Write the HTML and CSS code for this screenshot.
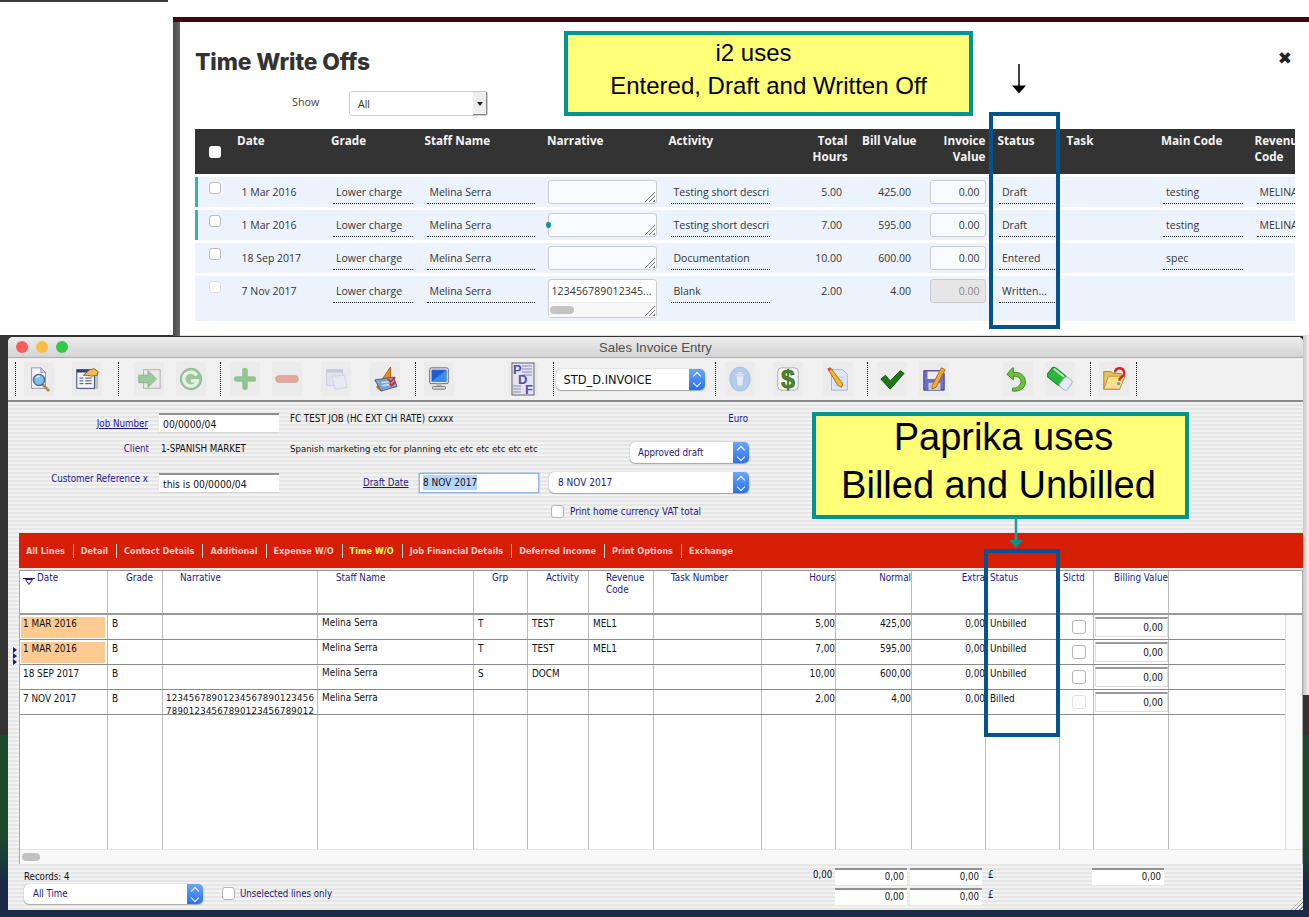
FILE: index.html
```html
<!DOCTYPE html>
<html lang="en">
<head>
<meta charset="utf-8">
<title>Time Write Offs vs Sales Invoice Entry</title>
<link rel="stylesheet" href="styles.css">
</head>
<body>
<div class="topline"></div>
<div class="desk-lower"></div>
<div class="desk-right"></div>

<section class="shell">
  <div class="modal">
    <header class="modal-head">
      <h1 class="modal-title">Time Write Offs</h1>
      <span class="modal-close">&#10006;</span>
    </header>
    <div class="show-row">
      <label class="show-label">Show</label>
      <div class="show-select"><span>All</span><i class="show-arrow"></i></div>
    </div>
    <div class="tw-table">
      <div class="tw-grid tw-header">
        <div class="th th-check"><input type="checkbox" class="tw-check head-check"></div>
        <div class="th">Date</div><div class="th">Grade</div><div class="th">Staff Name</div><div class="th">Narrative</div><div class="th">Activity</div>
        <div class="th num">Total<br>Hours</div><div class="th num">Bill Value</div><div class="th num">Invoice<br>Value</div>
        <div class="th th-status">Status</div><div class="th">Task</div><div class="th">Main Code</div><div class="th th-rev">Revenue Code</div>
      </div>
      <div class="tw-grid tw-row flagged">
        <div class="td-check"><input type="checkbox" class="tw-check"></div>
        <div class="td-date">1 Mar 2016</div><div class="dot">Lower charge</div><div class="dot">Melina Serra</div>
        <div class="area"><i class="grip"></i></div>
        <div class="dot">Testing short descri</div><div class="td-num">5.00</div><div class="td-num">425.00</div>
        <div class="inv">0.00</div><div class="dot dot-status">Draft</div><div></div><div class="dot">testing</div><div class="dot dot-rev">MELINA</div>
      </div>
      <div class="tw-grid tw-row flagged">
        <div class="td-check"><input type="checkbox" class="tw-check"></div>
        <div class="td-date">1 Mar 2016</div><div class="dot">Lower charge</div><div class="dot">Melina Serra</div>
        <div class="area"><i class="handle"></i><i class="grip"></i></div>
        <div class="dot">Testing short descri</div><div class="td-num">7.00</div><div class="td-num">595.00</div>
        <div class="inv">0.00</div><div class="dot dot-status">Draft</div><div></div><div class="dot">testing</div><div class="dot dot-rev">MELINA</div>
      </div>
      <div class="tw-grid tw-row">
        <div class="td-check"><input type="checkbox" class="tw-check"></div>
        <div class="td-date">18 Sep 2017</div><div class="dot">Lower charge</div><div class="dot">Melina Serra</div>
        <div class="area"><i class="grip"></i></div>
        <div class="dot">Documentation</div><div class="td-num">10.00</div><div class="td-num">600.00</div>
        <div class="inv">0.00</div><div class="dot dot-status">Entered</div><div></div><div class="dot">spec</div><div></div>
      </div>
      <div class="tw-grid tw-row tall">
        <div class="td-check"><input type="checkbox" class="tw-check dim"></div>
        <div class="td-date">7 Nov 2017</div><div class="dot">Lower charge</div><div class="dot">Melina Serra</div>
        <div class="area area-tall"><span class="area-text">123456789012345...</span><span class="area-scroll"><i class="area-thumb"></i></span><i class="grip"></i></div>
        <div class="dot">Blank</div><div class="td-num">2.00</div><div class="td-num">4.00</div>
        <div class="inv inv-off">0.00</div><div class="dot dot-status">Written...</div><div></div><div></div><div></div>
      </div>
    </div>
  </div>
</section>

<section class="win">
  <header class="titlebar">
    <span class="light red"></span><span class="light amber"></span><span class="light green"></span>
    <span class="win-title">Sales Invoice Entry</span>
  </header>
  <nav class="toolbar">
    <i class="sep"></i>
    <span class="tb"><svg viewBox="0 0 28 28"><path d="M6 2h10l5 5v17H6z" fill="#f5f5fc" stroke="#8f8fb8"/><path d="M16 2v5h5z" fill="#d5d5ee" stroke="#8f8fb8"/><path d="M18 20l6 6" stroke="#b08a50" stroke-width="3" stroke-linecap="round"/><circle cx="14" cy="15" r="6" fill="#79c2ef" stroke="#57677e" stroke-width="1.5"/><path d="M11 13a4 4 0 0 1 4-2" stroke="#e4f6ff" stroke-width="1.5" fill="none"/></svg></span>
    <span class="tb"><svg viewBox="0 0 28 28"><rect x="5" y="5" width="21" height="20" fill="#c0c0c0" rx="2"/><rect x="3" y="4" width="19" height="20" fill="#f4f4f4" stroke="#2f3f78"/><rect x="3" y="4" width="19" height="3" fill="#2f3f78"/><path d="M6 13h4M12 13h7M6 16h4M12 16h7M6 19h4M12 19h7" stroke="#2f3f78"/><path d="M10 10l7-6 5-1 4 3-1 4-6 1-4-1z" fill="#f0bd54" stroke="#8a5a1a"/></svg></span>
    <i class="sep"></i>
    <span class="tb faded"><svg viewBox="0 0 28 28"><rect x="8" y="4" width="18" height="20" fill="#e8e8e8" stroke="#777"/><path d="M3 10h10V5l9 9-9 9v-5H3z" fill="#4da84d" stroke="#2e7a2e"/></svg></span>
    <span class="tb faded"><svg viewBox="0 0 28 28"><circle cx="14" cy="14" r="11.5" fill="#4fa64f" stroke="#2f7f2f"/><path d="M20 10a7.5 7.5 0 1 0 1 6h-7" fill="none" stroke="#e8f6e8" stroke-width="3.5"/></svg></span>
    <i class="sep"></i>
    <span class="tb faded"><svg viewBox="0 0 28 28"><path d="M14 5v18M5 14h18" stroke="#3c9c3c" stroke-width="6" stroke-linecap="round"/></svg></span>
    <span class="tb faded"><svg viewBox="0 0 28 28"><rect x="2" y="10.500" width="24" height="7" rx="3" fill="#e06a50" stroke="#b85040"/></svg></span>
    <span class="tb faded"><svg viewBox="0 0 28 28"><rect x="4" y="4" width="17" height="17" fill="#dcdcf4" stroke="#a8a8d8"/><rect x="4" y="4" width="17" height="3" fill="#a8a8d8"/><path d="M10 11l13-1 3 13-13 2z" fill="#e4ecf8" stroke="#b0bcd8"/></svg></span>
    <span class="tb"><svg viewBox="0 0 28 28"><path d="M5 23L20 1v13L10 27z" fill="#e88a1a" stroke="#a85a10"/><path d="M3 15l20-3 4 10-17 5z" fill="#7aa6dc" stroke="#555"/><path d="M10 18l8-1M11 21l8-1" stroke="#fff"/><path d="M17 14l3 3 5-5M19 19l2 2 4-4" stroke="#e02020" stroke-width="1.8" fill="none"/></svg></span>
    <i class="sep"></i>
    <span class="tb"><svg viewBox="0 0 28 28"><rect x="4" y="2" width="20" height="17" rx="1.500" fill="#e6e6e6" stroke="#666"/><rect x="6" y="4" width="16" height="13" fill="#1a5fd8"/><path d="M6 17L22 4v13z" fill="#3f8cf0"/><path d="M11 19h6v3h-6z" fill="#bbb"/><rect x="7" y="22" width="14" height="3" rx="1" fill="#d8d8d8" stroke="#777"/></svg></span>
    <span class="tb tb-pdf"><svg viewBox="0 0 24 34"><rect x="1" y="1" width="22" height="32" fill="#e4e4f0" stroke="#666"/><path d="M11 4h10M11 7h10M11 10h10M11 13h10M2 24h8M2 27h8M2 30h8" stroke="#8888a8"/><text x="2" y="12" class="pdf-l">P</text><text x="7" y="22" class="pdf-l">D</text><text x="14" y="32" class="pdf-l">F</text></svg></span>
    <i class="sep"></i>
    <div class="stepper tb-select"><span>STD_D.INVOICE</span><i class="step"></i></div>
    <i class="sep"></i>
    <span class="tb faded"><svg viewBox="0 0 28 28"><ellipse cx="14" cy="14" rx="11" ry="13" fill="#7aaef0" stroke="#5c90d0"/><path d="M10.500 11h7l-1 10h-5z" fill="#e4eefc"/><path d="M9 9.500h10M12 7.500h4" stroke="#e4eefc" stroke-width="1.500"/></svg></span>
    <span class="tb"><svg viewBox="0 0 28 28"><rect x="3" y="2" width="22" height="24" rx="4" fill="#f6f6f6" stroke="#aaa"/><text x="14" y="24" class="dollar">$</text></svg></span>
    <span class="tb"><svg viewBox="0 0 28 28"><path d="M7 4h12l5 5v17H7z" fill="#dfe8fa" stroke="#9ab0dc"/><path d="M10 12h11M10 15h11M10 18h11M10 21h11" stroke="#b8c8ec"/><path d="M3 3l3-1 13 17-1 4-4-2z" fill="#f4b82c" stroke="#a86c10"/><path d="M3 3l3-1 1 2-3 2z" fill="#e05040"/></svg></span>
    <i class="sep"></i>
    <span class="tb"><svg viewBox="0 0 28 28"><path d="M2 14l5-4 5 6L23 5l4 3-15 17z" fill="#1d7a14" stroke="#0e4d0a" stroke-linejoin="round"/></svg></span>
    <span class="tb"><svg viewBox="0 0 28 28"><path d="M3 5h19l3 3v18H3z" fill="#6e6ec8" stroke="#3d3d8a"/><rect x="7" y="6" width="13" height="8" fill="#ececf8"/><rect x="8" y="18" width="13" height="8" fill="#c8c8d8"/><path d="M12 21L22 2l4 2-10 19-4 2z" fill="#f5a623" stroke="#a86a10"/></svg></span>
    <span class="tb"><svg viewBox="0 0 28 28"><path d="M8 2L2 9l7 6v-4c6 0 9 3 8 7s-5 6-9 6v3c8 1 14-3 14-10S16 6 9 7V2z" fill="#6cc23c" stroke="#3d8a1c"/></svg></span>
    <span class="tb"><svg viewBox="0 0 28 28"><g transform="rotate(38 14 14)"><rect x="0" y="7.500" width="19" height="13" rx="3" fill="#2cb53c" stroke="#1a7a26"/><rect x="17" y="7.500" width="10" height="13" rx="3" fill="#e4ecf8" stroke="#a8b8cc"/><path d="M2 9.500h14" stroke="#bfeac4" stroke-width="2"/></g></svg></span>
    <i class="sep"></i>
    <span class="tb"><svg viewBox="0 0 28 28"><path d="M3 6h8l2 2h9l-2 17H3z" fill="#e8c25a" stroke="#a88428"/><path d="M8 11h18l-6 14H3z" fill="#f8e08c" stroke="#b8942c"/><path d="M15 7a5 5 0 1 1 7 5l-2 2v2" fill="none" stroke="#d82020" stroke-width="2.500"/><circle cx="19" cy="19" r="1.800" fill="#3fa8d8"/></svg></span>
    <i class="sep"></i>
  </nav>

  <div class="stripes win-body">
    <form class="entry">
      <a class="lbl lbl-link lbl-job">Job Number</a>
      <input class="field field-job" value="00/0000/04" readonly>
      <span class="txt txt-top desc-a">FC TEST JOB (HC EXT CH RATE) cxxxx</span>
      <span class="lbl txt-top euro">Euro</span>

      <span class="lbl lbl-top lbl-client">Client</span>
      <span class="txt lbl-top val-client">1-SPANISH MARKET</span>
      <span class="txt lbl-top desc-b">Spanish marketing etc for planning etc etc etc etc etc etc</span>
      <div class="stepper sel-approved"><span>Approved draft</span><i class="step"></i></div>

      <span class="lbl lbl-top lbl-cust">Customer Reference x</span>
      <input class="field field-cust" value="this is 00/0000/04" readonly>
      <a class="lbl lbl-link lbl-draft">Draft Date</a>
      <div class="field-focus"><span class="sel-text">8 NOV 2017</span></div>
      <div class="stepper sel-date"><span>8 NOV 2017</span><i class="step"></i></div>

      <label class="check-line"><input type="checkbox" class="mac-check"><span>Print home currency VAT total</span></label>
    </form>

    <div class="tabs">
      <span class="tab">All Lines</span><span class="tab">Detail</span><span class="tab">Contact Details</span><span class="tab">Additional</span><span class="tab">Expense W/O</span><span class="tab tab-on">Time W/O</span><span class="tab">Job Financial Details</span><span class="tab">Deferred Income</span><span class="tab">Print Options</span><span class="tab tab-last">Exchange</span>
    </div>

    <div class="list">
      <div class="lgrid lhead">
        <div class="lh lh-date"><svg class="sort" viewBox="0 0 12 7"><path d="M0 .5h12M2.500 1.500h7L6 6.500z" fill="none" stroke="#1a1a80"/></svg>Date</div>
        <div class="lh lh-grade">Grade</div><div class="lh lh-narr">Narrative</div><div class="lh lh-staff">Staff Name</div><div class="lh lh-grp">Grp</div><div class="lh lh-act">Activity</div><div class="lh lh-rev">Revenue<br>Code</div><div class="lh lh-task">Task Number</div><div class="lh r">Hours</div><div class="lh r">Normal</div><div class="lh r">Extra</div><div class="lh lh-status">Status</div><div class="lh lh-sl">Slctd</div><div class="lh r">Billing Value</div><div class="lh lh-end"></div>
      </div>
      <div class="lmain">
        <div class="lrows">
          <div class="lgrid lrow"><div class="c c-date"><span class="hl">1 MAR 2016</span></div><div class="c">B</div><div class="c"></div><div class="c c-up">Melina Serra</div><div class="c">T</div><div class="c">TEST</div><div class="c">MEL1</div><div class="c"></div><div class="c r">5,00</div><div class="c r">425,00</div><div class="c r">0,00</div><div class="c c-st">Unbilled</div><div class="c c-box"><input type="checkbox" class="mac-check"></div><div class="c c-bv"><span class="bv">0,00</span></div><div class="c c-end"></div></div>
          <div class="lgrid lrow"><div class="c c-date"><span class="hl">1 MAR 2016</span></div><div class="c">B</div><div class="c"></div><div class="c c-up">Melina Serra</div><div class="c">T</div><div class="c">TEST</div><div class="c">MEL1</div><div class="c"></div><div class="c r">7,00</div><div class="c r">595,00</div><div class="c r">0,00</div><div class="c c-st">Unbilled</div><div class="c c-box"><input type="checkbox" class="mac-check"></div><div class="c c-bv"><span class="bv">0,00</span></div><div class="c c-end"></div></div>
          <div class="lgrid lrow"><div class="c c-date">18 SEP 2017</div><div class="c">B</div><div class="c"></div><div class="c c-up">Melina Serra</div><div class="c">S</div><div class="c">DOCM</div><div class="c"></div><div class="c"></div><div class="c r">10,00</div><div class="c r">600,00</div><div class="c r">0,00</div><div class="c c-st">Unbilled</div><div class="c c-box"><input type="checkbox" class="mac-check"></div><div class="c c-bv"><span class="bv">0,00</span></div><div class="c c-end"></div></div>
          <div class="lgrid lrow"><div class="c c-date">7 NOV 2017</div><div class="c">B</div><div class="c c-long">12345678901234567890123456<br>78901234567890123456789012</div><div class="c c-up">Melina Serra</div><div class="c"></div><div class="c"></div><div class="c"></div><div class="c"></div><div class="c r">2,00</div><div class="c r">4,00</div><div class="c r">0,00</div><div class="c c-st">Billed</div><div class="c c-box"><input type="checkbox" class="mac-check dim"></div><div class="c c-bv"><span class="bv">0,00</span></div><div class="c c-end"></div></div>
          <div class="lgrid lfill"><div class="c"></div><div class="c"></div><div class="c"></div><div class="c"></div><div class="c"></div><div class="c"></div><div class="c"></div><div class="c"></div><div class="c"></div><div class="c"></div><div class="c"></div><div class="c"></div><div class="c"></div><div class="c"></div><div class="c c-end"></div></div>
        </div>
        <div class="vscroll"></div>
      </div>
      <div class="hscroll"><i class="hthumb"></i></div>
    </div>

    <footer class="foot">
      <span class="f-records">Records: 4</span>
      <span class="f-zero">0,00</span>
      <span class="f-field">0,00</span><span class="f-field">0,00</span>
      <span class="f-pound">£</span>
      <span class="f-field f-bill">0,00</span>
      <div class="f-left">
        <div class="stepper sel-time"><span>All Time</span><i class="step"></i></div>
        <label class="check-line line-foot"><input type="checkbox" class="mac-check"><span>Unselected lines only</span></label>
      </div>
      <span class="f-field f-c2">0,00</span><span class="f-field">0,00</span>
      <span class="f-pound">£</span>
    </footer>
    <i class="win-grip"></i>
    <i class="nav-marks"></i>
  </div>
</section>

<aside class="callout callout-top"><p class="line-i2">i2 uses</p><p>Entered, Draft and Written Off</p></aside>
<svg class="arrow-black" viewBox="0 0 16 30"><path d="M8 0v24" stroke="#000" stroke-width="1.500"/><path d="M1 21.500h14L8 29.500z" fill="#000"/></svg>
<div class="status-box box-top"></div>
<aside class="callout callout-low"><p class="line-pap">Paprika uses</p><p class="line-bil">Billed and Unbilled</p></aside>
<svg class="arrow-teal" viewBox="0 0 16 30"><path d="M8 0v23" stroke="#17a19e" stroke-width="2.500"/><path d="M1 21h14l-7 8z" fill="#00938f"/></svg>
<div class="status-box box-low"></div>
</body>
</html>
```
FILE: styles.css
```css
* { box-sizing: border-box; }
html, body { margin: 0; padding: 0; }
body {
  position: relative;
  width: 1309px;
  height: 917px;
  overflow: hidden;
  background: #fff;
  font-family: "Open Sans", "Noto Sans", sans-serif;
  color: #222;
}
p { margin: 0; }

/* desktop behind the windows */
.topline { position: absolute; left: 0; top: 0; width: 168px; height: 2px; background: #3c3c3c; }
.desk-lower {
  position: absolute; left: 0; right: 0; top: 335px; bottom: 0;
  background:
    linear-gradient(#333 0 400px, transparent 400px),
    linear-gradient(#1d4a2b 0 500px, #1a3a3a 530px, #1b2a46 545px);
}
.desk-right {
  position: absolute; left: 1303px; right: 0; top: 335px; height: 360px;
  background: linear-gradient(90deg, #c4c4c4, #f4f4f4);
}

/* web modal */
.shell {
  position: absolute; left: 173px; top: 17px; right: 0; height: 319px;
  border-top: 5px solid #3d0812;
  padding-left: 7px;
  background: linear-gradient(90deg, #4a4a4a, #666 7px, #fff 7px);
}
.modal {
  height: 100%;
  background: #fff;
  border-radius: 6px 6px 0 0;
  padding: 0 14px 0 15px;
  border-bottom: 1px solid #ddd;
}
.modal-head { display: flex; justify-content: space-between; height: 58px; }
.modal-title {
  margin: 25px 0 0;
  font: 800 22.800px/30px Inter, "Open Sans", sans-serif;
  letter-spacing: -.1px;
  color: #333;
}
.modal-close { margin: 25px 3px 0 0; font: 700 17px/22px "DejaVu Sans", sans-serif; color: #222; }
.show-row { display: flex; align-items: flex-start; height: 49px; padding-left: 97px; }
.show-label { font-size: 10.800px; line-height: 14px; width: 57px; color: #444; margin-top: 15px; }
.show-select {
  width: 139px; height: 25px; margin-top: 11px;
  display: flex; justify-content: space-between; align-items: stretch;
  border: 1px solid #ccc; border-radius: 3px;
  font-size: 10.500px; line-height: 24px; padding-left: 8px; color: #333;
}
.show-arrow {
  position: relative; width: 14px;
  background: #eee; border-right: 1px solid #888; border-bottom: 1px solid #888;
}
.show-arrow::after {
  content: ""; position: absolute; left: 4px; top: 10px;
  border: 3px solid transparent; border-top: 4px solid #222; border-bottom: 0;
}
.tw-table { width: 1100px; overflow: hidden; }
.tw-grid {
  display: grid;
  grid-template-columns: 40px 94px 93.500px 122.500px 121.500px 113.500px 69.500px 69px 69px 77px 94.500px 93.500px 60px;
}
.tw-header { height: 45px; background: #333; color: #f4f4f4; margin-bottom: 3px; }
.th { font-weight: 700; font-size: 11.700px; line-height: 16px; padding: 2.500px 0 0 2px; }
.th.num { text-align: right; padding: 2.500px 2px 0 0; white-space: nowrap; }
.th-status { padding-left: 10px; }
.th-rev { width: 50px; }
.tw-check {
  appearance: none; margin: 0; display: block;
  width: 12px; height: 12px; background: #fff; border: 1px solid #bbb; border-radius: 3px;
}
.tw-check.dim { border-color: #ddd; }
.head-check { margin: 15px 0 0 12px; border: 0; height: 12px; }
.th-check { padding: 2px 0 0 2px; }
.tw-row { height: 30px; margin-bottom: 3px; background: #edf3fc; font-size: 10.500px; color: #333; align-items: start; }
.tw-row.tall { height: 45px; margin-bottom: 0; }
.tw-row.flagged { box-shadow: inset 3px 0 0 #3ab0ad; }
.td-check { padding: 5px 0 0 14px; }
.td-date { margin-top: 3px; line-height: 24px; padding-left: 6.500px; }
.td-num { margin-top: 3px; line-height: 24px; text-align: right; padding-right: 7.500px; }
.dot {
  margin: 3px 10px 0 4px; height: 24px; line-height: 24px;
  border-bottom: 1px dotted #222; padding-left: 3px;
  white-space: nowrap; overflow: hidden;
}
.dot-status { margin: 3px 10px 0 11.500px; }
.dot-rev { margin-right: 0; }
.area {
  position: relative; margin: 3px 9.500px 0 2.500px; height: 24px;
  border: 1px solid #ccc; border-radius: 3px; background: #f8fbfe;
}
.area-tall { height: 39px; background: #fff; }
.area-text { display: block; padding-left: 3px; line-height: 23px; font-size: 10.500px; letter-spacing: .1px; white-space: nowrap; }
.area-scroll { display: block; position: absolute; left: 0; right: 0; bottom: 0; height: 15px; background: #f8f8f8; border-top: 1px solid #eee; }
.area-thumb { display: block; position: absolute; left: 1px; top: 3px; width: 24px; height: 8px; border-radius: 4px; background: #c4c4c4; }
.grip {
  position: absolute; right: 1px; bottom: 1px; width: 11px; height: 11px;
  background: repeating-linear-gradient(135deg, transparent 0 2px, #777 2px 3px);
  clip-path: polygon(100% 0, 100% 100%, 0 100%);
}
.handle {
  position: absolute; left: -3px; top: 8px; width: 5px; height: 6px;
  background: #0f9490; border-radius: 50%;
}
.inv {
  margin: 3px 2px 0 11px; height: 24px; line-height: 22px; text-align: right; padding-right: 5px;
  border: 1px solid #ccc; border-radius: 3px; background: #f8fbfe;
}
.inv-off { background: #e6e6e6; color: #888; }

/* mac window */
.win {
  position: absolute; left: 8px; top: 337px; width: 1295px; height: 573px;
  display: flex; flex-direction: column;
  background: #f0f0f0; border-radius: 5px 5px 0 0;
  font-family: "DejaVu Sans Condensed", "DejaVu Sans", sans-serif;
}
.titlebar {
  position: relative; height: 21px; flex: none; display: flex; align-items: center;
  padding-left: 8px; gap: 8px;
  background: linear-gradient(#ececec, #d4d4d4);
  border-bottom: 1px solid #adadad; border-radius: 5px 5px 0 0;
}
.light { width: 12px; height: 12px; border-radius: 50%; }
.red { background: #fc5b57; } .amber { background: #fdbc40; } .green { background: #34c84a; }
.win-title {
  position: absolute; left: 0; right: 0; top: 0; text-align: center;
  font: 13.200px/21px "Liberation Sans", sans-serif; color: #505050;
}
.toolbar {
  height: 44px; flex: none;
  display: grid; align-items: center;
  grid-template-columns: 9px 48px 46px 16.500px 42px 44px 10px 42px 49px 48.500px 45px 9.500px 84px 44.500px 3px 159.300px 10px 48px 50.500px 43.500px 10px 42px 84.500px 42px 44.500px 9.500px 37px 1fr;
  padding-left: 6.500px;
  background: #f0f0f0; border-bottom: 2px solid #8a8a8a;
}
.sep { display: block; width: 1px; height: 34px; border-left: 1px dotted #111; }
.tb { display: flex; width: 30px; height: 34px; align-items: center; justify-content: center; background: #ebebeb; }
.tb svg { width: 26px; height: 26px; display: block; }
.tb.faded svg { opacity: .5; }
.tb-pdf svg { width: 24px; height: 34px; }
.pdf-l { font: 700 13px "Liberation Sans", sans-serif; fill: #5252a6; }
.dollar { font: 700 27px "Liberation Sans", sans-serif; fill: #4c8a2c; text-anchor: middle; stroke: #2c5a14; stroke-width: .6px; }

.stepper {
  display: flex; justify-content: space-between;
  background: #fff; border-radius: 5px; box-shadow: 0 0 1px #777, 0 1px 1px #aaa;
  color: #1a1a80; overflow: hidden;
}
.stepper > span { padding-left: 9px; }
.step {
  position: relative; width: 16px; flex: none;
  background: linear-gradient(#6aa6f8, #2a70ee);
}
.step::before, .step::after {
  content: ""; position: absolute; left: 5px; width: 5px; height: 5px;
  border: solid #fff; border-width: 1px 0 0 1px;
}
.step::before { top: calc(50% - 6px); transform: rotate(45deg); }
.step::after { top: calc(50% + 1px); transform: rotate(225deg); }
.tb-select { width: 149.300px; height: 21px; font-size: 12.700px; line-height: 21px; color: #111; }
.tb-select > span { padding-left: 8px; }

.win-body { position: relative; flex: 1; display: flex; flex-direction: column; min-height: 0; }
.stripes { background: repeating-linear-gradient(#f2f2f2 0 2px, #e6e6e6 2px 4px); }

.entry {
  height: 131px; flex: none; padding-top: 11px; font-size: 9.700px; color: #1a1a80;
  display: grid;
  grid-template-columns: 143px 8px 120px 11px 73px 56px 130px 81px 119px;
  grid-template-rows: 20px 21px 21px 13px;
  row-gap: 9px;
}
.lbl { color: #1a1a80; white-space: nowrap; }
.lbl-link { text-decoration: underline; cursor: pointer; align-self: center; }
.lbl-job { grid-column: 1; grid-row: 1; justify-self: end; margin-right: 3px; }
.field {
  width: 120px; height: 20px; border: 0; border-top: 2px solid #909090; border-bottom: 1px solid #d4d4d4;
  background: #fff; padding: 0 4px; margin: 0; font: 10.300px "DejaVu Sans Condensed", "DejaVu Sans", sans-serif; color: #111; outline: 0;
}
.field-job { grid-column: 3; grid-row: 1; }
.txt { color: #111; white-space: nowrap; }
.txt-top { align-self: start; line-height: 12px; }
.desc-a { grid-column: 5 / 8; grid-row: 1; }
.euro { grid-column: 9; grid-row: 1; justify-self: end; margin-right: 1px; }
.lbl-top { align-self: start; line-height: 14px; }
.lbl-client { grid-column: 1; grid-row: 2; justify-self: end; margin-right: 2px; }
.val-client { grid-column: 3; grid-row: 2; padding-left: 2px; }
.desc-b { grid-column: 5 / 9; grid-row: 2; font-size: 9.560px; }
.sel-approved { grid-column: 9; grid-row: 2; line-height: 21px; }
.sel-approved > span { padding-left: 8px; }
.lbl-cust { grid-column: 1; grid-row: 3; justify-self: end; margin-right: 3px; margin-left: -40px; }
.field-cust { grid-column: 3; grid-row: 3; margin-top: 1px; }
.lbl-draft { grid-column: 6; grid-row: 3; }
.field-focus {
  grid-column: 7; grid-row: 3; width: 118px; height: 18px; margin: 2px 0 0 .5px; padding: 0 3.500px;
  background: #fff; box-shadow: 0 0 0 1.500px #8cb8ee; color: #111; line-height: 18px; font-size: 10px;
}
.sel-text { background: #b3d4fc; display: inline-block; line-height: 15px; }
.sel-date { grid-column: 8 / 10; grid-row: 3; line-height: 21px; font-size: 10px; }
.check-line { display: flex; align-items: center; gap: 6px; color: #1a1a80; white-space: nowrap; }
.entry .check-line { grid-column: 8 / 10; grid-row: 4; margin: 3px 0 0 2px; height: 13px; font-size: 9.800px; }
.mac-check {
  appearance: none; margin: 0; display: block; flex: none;
  width: 13px; height: 13px; background: #fff; border: 1px solid #b4b4b4; border-radius: 3px;
}
.mac-check.dim { border-color: #e0e0e0; }

.tabs {
  height: 35px; flex: none; margin-left: 11px;
  display: flex; align-items: center; padding-left: 0;
  background: #d61e05;
}
.tab {
  height: 14px; line-height: 14px; padding: 0 8px 0 7px; border-right: 1px solid #f5d8d0;
  font-size: 9.050px; font-weight: 700; color: #f3cdc4; white-space: nowrap;
}
.tab-on { color: #ffff78; }
.tab-last { border-right: 0; }

.list { margin: 2px 1px 0 12px; flex: none; height: 294px; display: flex; flex-direction: column; background: #fff; border-top: 1px solid #999; box-shadow: -1px 0 0 #aaa, 1px 0 0 #aaa; }
.lgrid {
  display: grid;
  grid-template-columns: 88px 55px 155px 156px 54px 61px 65px 108px 74px 76px 74px 74px 34px 75px 1fr;
}
.lhead { height: 44px; flex: none; border-bottom: 2px solid #9a9a9a; font-size: 9.800px; color: #1a1a80; }
.lh { border-right: 1px solid #bbb; padding: 1px 0 0 0; line-height: 12px; }
.lh.r { text-align: right; padding-right: 0; }
.lh-end { border-right: 0; }
.lh-date { display: flex; padding-left: 3px; }
.sort { width: 12px; height: 7px; margin: 6px 2px 0 0; flex: none; }
.lh-grade { padding-left: 18px; } .lh-narr { padding-left: 17px; } .lh-staff { padding-left: 18px; }
.lh-grp { padding-left: 18px; } .lh-act { padding-left: 18px; } .lh-rev { padding-left: 17px; }
.lh-task { padding-left: 17px; } .lh-status { padding-left: 4px; } .lh-sl { padding-left: 3px; }
.lmain { flex: 1; display: flex; min-height: 0; }
.lrows { width: 1266px; display: flex; flex-direction: column; border-right: 1px solid #ddd; }
.vscroll { flex: 1; background: #fafafa; }
.lrow { height: 25px; flex: none; border-bottom: 1px solid #8a8a8a; font-size: 9.900px; color: #111; }
.lfill { flex: 1; }
.c { border-right: 1px solid #bbb; padding: 2px 0 0 4px; line-height: 13px; white-space: nowrap; overflow: hidden; }
.c.r { text-align: right; padding: 2px 0 0 0; }
.c-end { border-right: 0; }
.c-date { padding: 2px 2px 0 3px; }
.hl { display: block; background: #fdcb92; margin: 0 0 0 -2px; padding: 0 0 0 2px; height: 21px; }
.c-up { padding-top: 1px; }
.c-long { padding: 2px 0 0 3px; line-height: 12.500px; font-size: 9.500px; letter-spacing: .26px; }
.c-st { padding-left: 4px; }
.c-box { padding: 5px 0 0 12px; overflow: visible; }
.c-box .mac-check { width: 14px; height: 14px; }
.c-bv { padding: 2px 0 0 1px; }
.bv {
  display: block; width: 73px; height: 20px; padding-right: 4px; text-align: right; line-height: 17px;
  background: #fff; border: 1px solid #ddd; border-top: 2px solid #999;
}
.hscroll { height: 15px; flex: none; background: #f8f8f8; border-top: 1px solid #e4e4e4; position: relative; }
.hthumb { position: absolute; left: 2px; top: 3px; width: 18px; height: 8px; border-radius: 4px; background: #c2c2c2; }

.foot {
  flex: 1; min-height: 0; padding: 4px 0 0 16px;
  display: grid; font-size: 9.600px; color: #111;
  grid-template-columns: 789px 22px 75px 75px 107px 73px;
  grid-template-rows: 17px 17px;
  row-gap: 3px;
}
.f-records { padding-top: 2px; line-height: 14px; }
.f-zero { line-height: 14px; text-align: right; padding-right: 3px; }
.f-field {
  width: 72px; height: 17px; line-height: 13px; text-align: right; padding-right: 3px;
  background: #fff; border-top: 2px solid #909090;
}
.f-pound { padding-left: 3px; line-height: 14px; }
.f-left { grid-column: 1 / 3; display: flex; gap: 19px; align-items: flex-start; margin-top: -4px; }
.sel-time { width: 179px; height: 20px; line-height: 20px; }
.line-foot { height: 19px; gap: 5px; }
.f-c2 { grid-column: 3; }
.win-grip {
  position: absolute; right: 0; bottom: 0; width: 12px; height: 12px;
  background: repeating-linear-gradient(135deg, transparent 0 2px, #888 2px 3px);
  clip-path: polygon(100% 0, 100% 100%, 0 100%);
}
.nav-marks {
  position: absolute; left: 5px; top: 245px; width: 4px; height: 18px;
  background: #1a1a80;
  clip-path: polygon(0 0, 100% 3px, 0 6px, 100% 9px, 0 12px, 100% 15px, 0 18px);
}

/* annotations on top of the screenshot */
.callout {
  position: absolute; background: #ffff78; border: 4px solid #00938f; color: #000;
  font-family: "Liberation Sans", Arial, sans-serif; text-align: center;
}
.callout-top { left: 564px; top: 31px; width: 409px; height: 85px; font-size: 24px; line-height: 33px; padding-top: 1px; }
.line-i2 { padding-right: 30px; }
.callout-low { left: 812px; top: 412px; width: 377px; height: 107px; font-size: 38px; line-height: 46px; }
.line-pap { padding-left: 6px; margin: -2px 0 2px; }
.line-bil { padding-right: 4px; }
.status-box { position: absolute; border: 4px solid #02538f; }
.box-top { left: 989px; top: 112px; width: 71px; height: 217px; }
.box-low { left: 984px; top: 549px; width: 76px; height: 188px; }
.arrow-black { position: absolute; left: 1011px; top: 64px; width: 16px; height: 30px; }
.arrow-teal { position: absolute; left: 1008px; top: 519px; width: 16px; height: 30px; }
```
